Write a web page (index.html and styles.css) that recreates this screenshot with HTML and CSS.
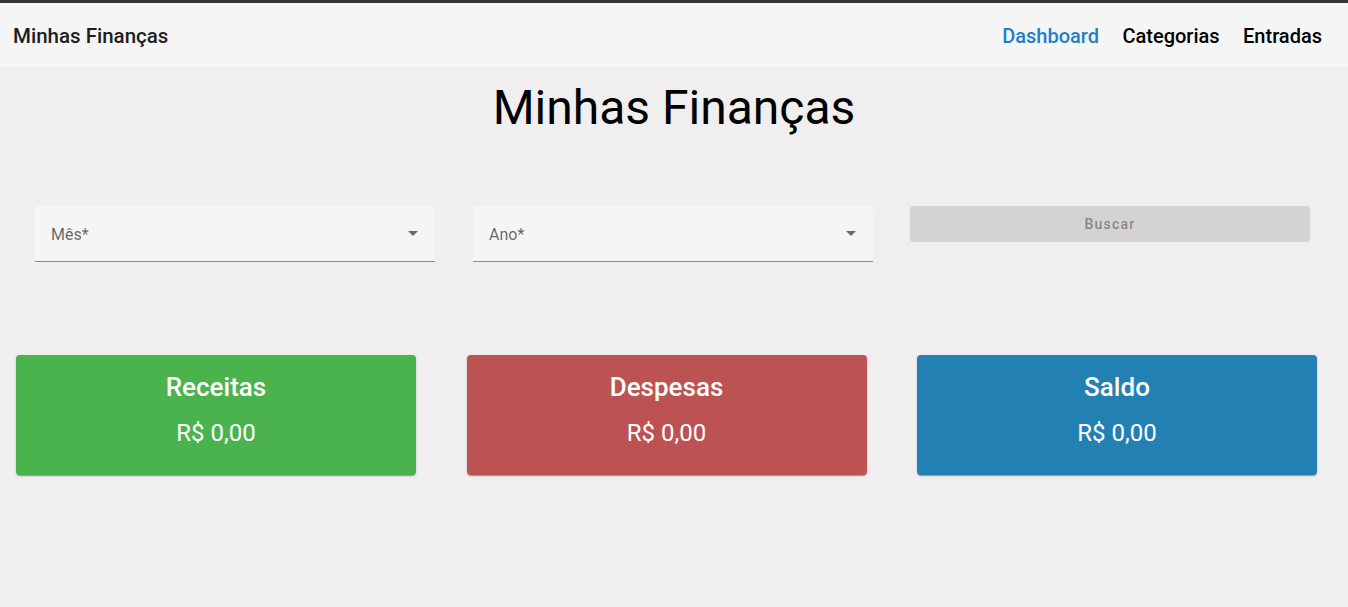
FILE: index.html
```html
<!DOCTYPE html>
<html lang="pt-BR">
<head>
<meta charset="utf-8">
<title>Minhas Finanças</title>
<link rel="stylesheet" href="styles.css">
</head>
<body>
<header class="toolbar">
  <span class="brand">Minhas Finanças</span>
  <nav class="nav">
    <a class="nav-link active">Dashboard</a>
    <a class="nav-link">Categorias</a>
    <a class="nav-link">Entradas</a>
  </nav>
</header>
<main class="content">
  <h1 class="page-title">Minhas Finanças</h1>
  <div class="filters">
    <div class="field"><span class="field-label">Mês*</span><span class="arrow"></span></div>
    <div class="field"><span class="field-label">Ano*</span><span class="arrow"></span></div>
    <div class="btn-col"><button class="btn" disabled>Buscar</button></div>
  </div>
  <div class="cards">
    <div class="card green"><div class="card-title">Receitas</div><div class="card-value">R$ 0,00</div></div>
    <div class="card red"><div class="card-title">Despesas</div><div class="card-value">R$ 0,00</div></div>
    <div class="card blue"><div class="card-title">Saldo</div><div class="card-value">R$ 0,00</div></div>
  </div>
</main>
</body>
</html>
```
FILE: styles.css
```css
* { box-sizing: border-box; }
html, body { margin: 0; padding: 0; }
body {
  font-family: Roboto, "Liberation Sans", sans-serif;
  background: #f0eeef;
  border-top: 3px solid #333333;
  min-height: 607px;
}
.toolbar {
  height: 64px;
  background: #f5f5f5;
  display: flex;
  align-items: center;
  justify-content: space-between;
  padding: 2px 13px 0;
}
.brand {
  font-size: 20.5px;
  font-weight: 500;
  color: #1d1d1d;
}
.nav { display: flex; gap: 23.5px; padding-right: 13px; }
.nav-link {
  font-size: 20px;
  font-weight: 500;
  color: #000;
  cursor: pointer;
}
.nav-link.active { color: #1e7fc7; }
.content { padding: 0; }
.page-title {
  margin: 0;
  padding-top: 13px;
  text-align: center;
  font-size: 48px;
  font-weight: 400;
  line-height: 56px;
  color: #000;
}
.filters {
  display: flex;
  gap: 38px;
  padding-left: 35px;
  margin-top: 70px;
  align-items: flex-start;
}
.field {
  width: 400px;
  height: 56px;
  background: #f5f5f5;
  border-radius: 4px 4px 0 0;
  border-bottom: 1px solid #8c8c8c;
  display: flex;
  align-items: center;
  justify-content: space-between;
  padding: 0 17px 0 16px;
}
.field-label {
  font-size: 16px;
  color: rgba(0,0,0,0.6);
  padding-top: 1px;
}
.arrow {
  width: 0; height: 0;
  border-left: 5px solid transparent;
  border-right: 5px solid transparent;
  border-top: 5px solid #6b6b6b;
}
.btn-col { width: 400px; }
.btn {
  width: 400px;
  height: 36px;
  border: none;
  border-radius: 4px;
  background: #d4d2d3;
  color: rgba(0,0,0,0.38);
  font-family: Roboto, "Liberation Sans", sans-serif;
  font-size: 14px;
  font-weight: 500;
  letter-spacing: 1.25px;
  margin-left: -1px;
}
.cards {
  display: flex;
  gap: 50.5px;
  padding-left: 16px;
  margin-top: 93px;
}
.card {
  width: 400px;
  height: 120px;
  border-radius: 4px;
  color: #fff;
  text-align: center;
  box-shadow: 0 2px 1px -1px rgba(0,0,0,.2), 0 1px 1px 0 rgba(0,0,0,.14), 0 1px 3px 0 rgba(0,0,0,.12);
  padding-top: 16px;
}
.card.green { background: #4bb34e; }
.card.red { background: #bd5252; }
.card.blue { background: #2280b3; }
.card-title {
  font-size: 26px;
  font-weight: 500;
  line-height: 32px;
}
.card-value {
  font-size: 24px;
  font-weight: 400;
  line-height: 32px;
  margin-top: 14px;
}
```
